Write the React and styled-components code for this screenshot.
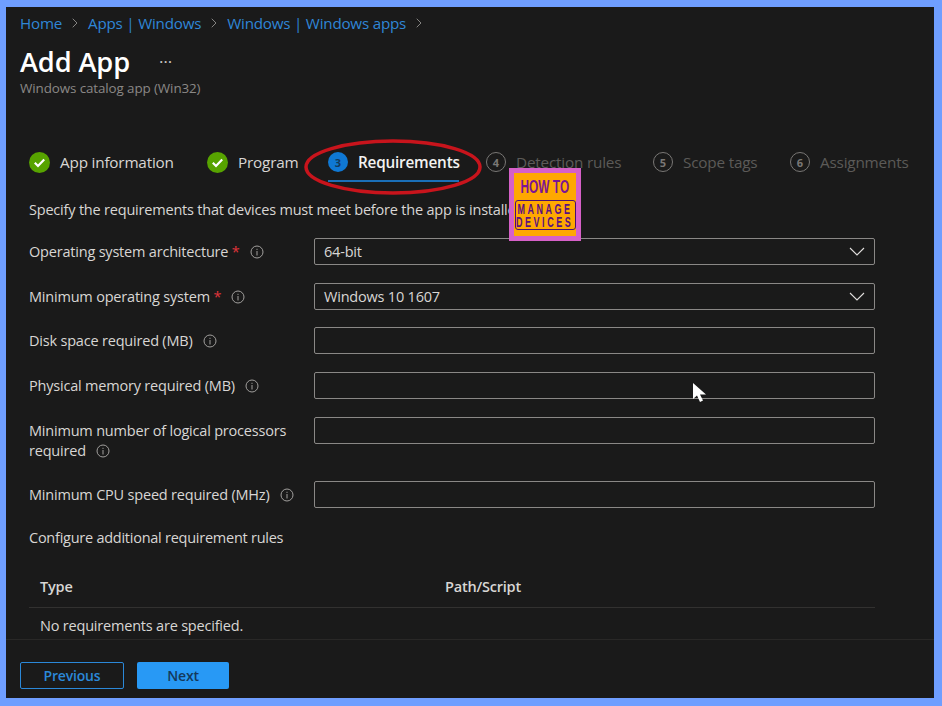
import React from 'react';
import styled, { createGlobalStyle } from 'styled-components';
import { ChevronRight } from 'lucide-react';

const GlobalStyle = createGlobalStyle`
  html, body {
    margin: 0;
    height: 100%;
    overflow: hidden;
    background: #6f9eff;
  }
  * { box-sizing: border-box; }
`;

const InfoIcon = () => (
  <InfoSvg viewBox="0 0 14 14" aria-hidden="true">
    <circle cx="7" cy="7" r="6" fill="none" stroke="#a19f9d" strokeWidth="1" />
    <rect x="6.5" y="6" width="1" height="4.5" fill="#a19f9d" />
    <rect x="6.5" y="3.8" width="1" height="1.1" fill="#a19f9d" />
  </InfoSvg>
);

const CheckIcon = () => (
  <StepSvg viewBox="0 0 21 21" aria-hidden="true">
    <circle cx="10.5" cy="10.5" r="10.5" fill="#57a300" />
    <path d="M5.8 10.8l3.2 3.2 6.2-6.6" fill="none" stroke="#fff" strokeWidth="2.2" />
  </StepSvg>
);

const SelectChevron = () => (
  <ChevronSvg viewBox="0 0 16 9" aria-hidden="true">
    <path d="M1 1l7 7 7-7" fill="none" stroke="#e1dfdd" strokeWidth="1.1" />
  </ChevronSvg>
);

const crumbs = ['Home', 'Apps | Windows', 'Windows | Windows apps'];

const doneSteps = [
  { label: 'App information', width: 178 },
  { label: 'Program', width: 121 },
];

const laterSteps = [
  { n: 4, label: 'Detection rules', width: 167 },
  { n: 5, label: 'Scope tags', width: 137 },
  { n: 6, label: 'Assignments', width: 121 },
];

const fields = [
  { label: 'Operating system architecture', required: true, value: '64-bit', select: true },
  { label: 'Minimum operating system', required: true, value: 'Windows 10 1607', select: true },
  { label: 'Disk space required (MB)' },
  { label: 'Physical memory required (MB)' },
  { label: 'Minimum number of logical processors required', tall: true },
  { label: 'Minimum CPU speed required (MHz)' },
];

export default function App() {
  return (
    <Frame>
      <GlobalStyle />
      <Panel>
        <Content>
          <Breadcrumb>
            {crumbs.map((crumb) => (
              <Crumb key={crumb}>
                <CrumbLink>{crumb}</CrumbLink>
                <ChevronRight size={16} strokeWidth={1.2} color="#a19f9d" />
              </Crumb>
            ))}
          </Breadcrumb>
          <TitleRow>
            <Title>Add App</Title>
            <More>…</More>
          </TitleRow>
          <Subtitle>Windows catalog app (Win32)</Subtitle>

          <Tabs>
            {doneSteps.map((step) => (
              <Tab key={step.label} $width={step.width}>
                <CheckIcon />
                <TabLabel>{step.label}</TabLabel>
              </Tab>
            ))}
            <Tab $width={158}>
              <CurrentNumber>3</CurrentNumber>
              <TabLabel $active>Requirements</TabLabel>
              <TabUnderline />
            </Tab>
            {laterSteps.map((step) => (
              <Tab key={step.n} $width={step.width}>
                <LaterNumber>{step.n}</LaterNumber>
                <TabLabel $muted>{step.label}</TabLabel>
              </Tab>
            ))}
          </Tabs>

          <Description>
            Specify the requirements that devices must meet before the app is installed:
          </Description>

          <Form>
            {fields.map((field) => (
              <Row key={field.label} $tall={field.tall}>
                <Label>
                  {field.label}
                  {field.required && <Required> *</Required>}
                  <InfoIcon />
                </Label>
                <Field>
                  {field.value}
                  {field.select && <SelectChevron />}
                </Field>
              </Row>
            ))}
          </Form>

          <SectionLabel>Configure additional requirement rules</SectionLabel>

          <Table>
            <TableHead>
              <HeadCell>Type</HeadCell>
              <HeadCell>Path/Script</HeadCell>
            </TableHead>
            <EmptyRow>No requirements are specified.</EmptyRow>
          </Table>
        </Content>

        <Footer>
          <PreviousButton>Previous</PreviousButton>
          <NextButton>Next</NextButton>
        </Footer>

        <RedCircle viewBox="0 0 180 60" aria-hidden="true">
          <ellipse cx="90" cy="30" rx="87" ry="26" fill="none" stroke="#c8141c" strokeWidth="3.5" />
        </RedCircle>

        <Logo>
          <LogoTop>HOW TO</LogoTop>
          <LogoBox>
            <span>MANAGE</span>
            <span>DEVICES</span>
          </LogoBox>
        </Logo>

        <Cursor viewBox="0 0 16 22" aria-hidden="true">
          <path d="M1 1v16l4-3.6L8 20l3-1.4-3-6.2h6z" fill="#fff" />
        </Cursor>
      </Panel>
    </Frame>
  );
}

const Frame = styled.div`
  height: 706px;
  width: 942px;
  padding: 7px 8px 8px 6px;
  font-family: "Open Sans", "Noto Sans", sans-serif;
`;

const Panel = styled.div`
  position: relative;
  height: 100%;
  display: flex;
  flex-direction: column;
  background: #1a1a1a;
  overflow: hidden;
`;

const Content = styled.div`
  flex: 1;
  min-height: 0;
  overflow: hidden;
  padding: 6px 0 0 14px;
`;

const Breadcrumb = styled.div`
  display: flex;
  align-items: center;
  height: 20px;
  gap: 5px;
`;

const Crumb = styled.div`
  display: flex;
  align-items: center;
  gap: 5px;
`;

const CrumbLink = styled.span`
  font-size: 15.2px;
  letter-spacing: -0.22px;
  color: #2f86d6;
`;

const TitleRow = styled.div`
  display: flex;
  align-items: center;
  gap: 29px;
  margin-top: 10px;
  height: 36px;
`;

const Title = styled.h1`
  margin: 0;
  font-size: 27.2px;
  font-weight: 600;
  letter-spacing: -0.1px;
  color: #ffffff;
`;

const More = styled.span`
  font-size: 17px;
  color: #c8c6c4;
  margin-top: -9px;
`;

const Subtitle = styled.div`
  font-size: 13.4px;
  letter-spacing: -0.1px;
  color: #8a8886;
  line-height: 18px;
`;

const Tabs = styled.div`
  display: flex;
  align-items: center;
  height: 40px;
  margin: 45px 0 0 9px;
`;

const Tab = styled.div`
  position: relative;
  display: flex;
  align-items: center;
  gap: 10px;
  width: ${(props) => props.$width}px;
  height: 40px;
  flex: none;
`;

const StepSvg = styled.svg`
  width: 21px;
  height: 21px;
  flex: none;
`;

const TabLabel = styled.span`
  font-size: 15.3px;
  letter-spacing: -0.2px;
  white-space: nowrap;
  font-weight: ${(props) => (props.$active ? 600 : 400)};
  color: ${(props) => (props.$muted ? '#5c5a58' : props.$active ? '#f3f2f1' : '#d8d6d4')};
`;

const CurrentNumber = styled.span`
  width: 20px;
  height: 20px;
  flex: none;
  border-radius: 50%;
  background: #0f78d4;
  color: #12395c;
  font-size: 11px;
  font-weight: 700;
  display: flex;
  align-items: center;
  justify-content: center;
`;

const LaterNumber = styled.span`
  width: 20px;
  height: 20px;
  flex: none;
  border-radius: 50%;
  border: 1px solid #797775;
  color: #797775;
  font-size: 11px;
  font-weight: 700;
  display: flex;
  align-items: center;
  justify-content: center;
`;

const TabUnderline = styled.span`
  position: absolute;
  left: 0;
  bottom: 0;
  width: 131px;
  height: 2px;
  background: #1a6fb8;
`;

const Description = styled.p`
  margin: 18px 0 0 9px;
  font-size: 14.5px;
  letter-spacing: -0.2px;
  line-height: 20px;
  color: #d8d6d4;
  white-space: nowrap;
`;

const Form = styled.div`
  display: flex;
  flex-direction: column;
  margin: 18px 0 0 9px;
`;

const Row = styled.div`
  display: grid;
  grid-template-columns: 285px 561px;
  align-items: start;
  margin-bottom: ${(props) => (props.$tall ? 20 : 17.7)}px;
`;

const Label = styled.label`
  display: block;
  padding: 4px 12px 0 0;
  font-size: 14.5px;
  letter-spacing: -0.2px;
  line-height: 20px;
  color: #d8d6d4;
`;

const Required = styled.span`
  color: #e0343a;
`;

const InfoSvg = styled.svg`
  width: 14px;
  height: 14px;
  margin-left: 10px;
  vertical-align: -2px;
`;

const ChevronSvg = styled.svg`
  width: 16px;
  height: 9px;
  flex: none;
`;

const Field = styled.div`
  height: 27px;
  display: flex;
  align-items: center;
  justify-content: space-between;
  padding: 0 9px 0 9px;
  border: 1px solid #8a8886;
  border-radius: 2px;
  font-size: 14.5px;
  letter-spacing: -0.2px;
  color: #d8d6d4;
`;

const SectionLabel = styled.div`
  margin: 3px 0 0 9px;
  font-size: 14.5px;
  letter-spacing: -0.25px;
  line-height: 20px;
  color: #d8d6d4;
`;

const Table = styled.div`
  margin: 29px 0 0 9px;
  width: 846px;
`;

const TableHead = styled.div`
  display: grid;
  grid-template-columns: 405px 1fr;
  height: 31px;
  padding: 0 0 0 11px;
  border-bottom: 1px solid #323130;
`;

const HeadCell = styled.span`
  font-size: 14.5px;
  font-weight: 600;
  letter-spacing: -0.2px;
  line-height: 20px;
  color: #d8d6d4;
`;

const EmptyRow = styled.div`
  padding: 8px 0 0 11px;
  font-size: 14.5px;
  letter-spacing: -0.2px;
  line-height: 20px;
  color: #d8d6d4;
`;

const Footer = styled.div`
  flex: none;
  height: 59px;
  display: flex;
  align-items: flex-start;
  gap: 13px;
  padding: 22px 0 0 14px;
  border-top: 1px solid #292827;
`;

const PreviousButton = styled.button`
  width: 104px;
  height: 27px;
  border: 1px solid #2b88d8;
  border-radius: 2px;
  background: transparent;
  color: #2b88d8;
  font: 600 14px "Open Sans", sans-serif;
  letter-spacing: -0.2px;
`;

const NextButton = styled.button`
  width: 92px;
  height: 27px;
  border: none;
  border-radius: 2px;
  background: #2899f5;
  color: #14395c;
  font: 600 14px "Open Sans", sans-serif;
  letter-spacing: -0.2px;
`;

const RedCircle = styled.svg`
  position: absolute;
  left: 297px;
  top: 130px;
  width: 180px;
  height: 60px;
`;

const Logo = styled.div`
  position: absolute;
  left: 503px;
  top: 161px;
  width: 72px;
  height: 73px;
  padding: 6px 0 0;
  background: #ffa800;
  border: 5px solid #d660c8;
  display: flex;
  flex-direction: column;
  align-items: center;
  font-family: "Liberation Sans", sans-serif;
  color: #7a1596;
  overflow: hidden;
`;

const LogoTop = styled.div`
  font-size: 18px;
  font-weight: 700;
  line-height: 17px;
  transform: scaleX(0.66);
  white-space: nowrap;
`;

const LogoBox = styled.div`
  margin-top: 4px;
  width: 61px;
  flex: none;
  height: 30px;
  border: 1.5px solid #4a1070;
  border-radius: 3px;
  display: flex;
  flex-direction: column;
  align-items: center;
  justify-content: center;
  font-size: 15px;
  font-weight: 700;
  line-height: 13px;
  color: #5a1080;

  & span {
    display: block;
    transform: scaleX(0.6);
    letter-spacing: 4.2px;
    white-space: nowrap;
  }
`;

const Cursor = styled.svg`
  position: absolute;
  left: 686px;
  top: 375px;
  width: 16px;
  height: 22px;
`;
